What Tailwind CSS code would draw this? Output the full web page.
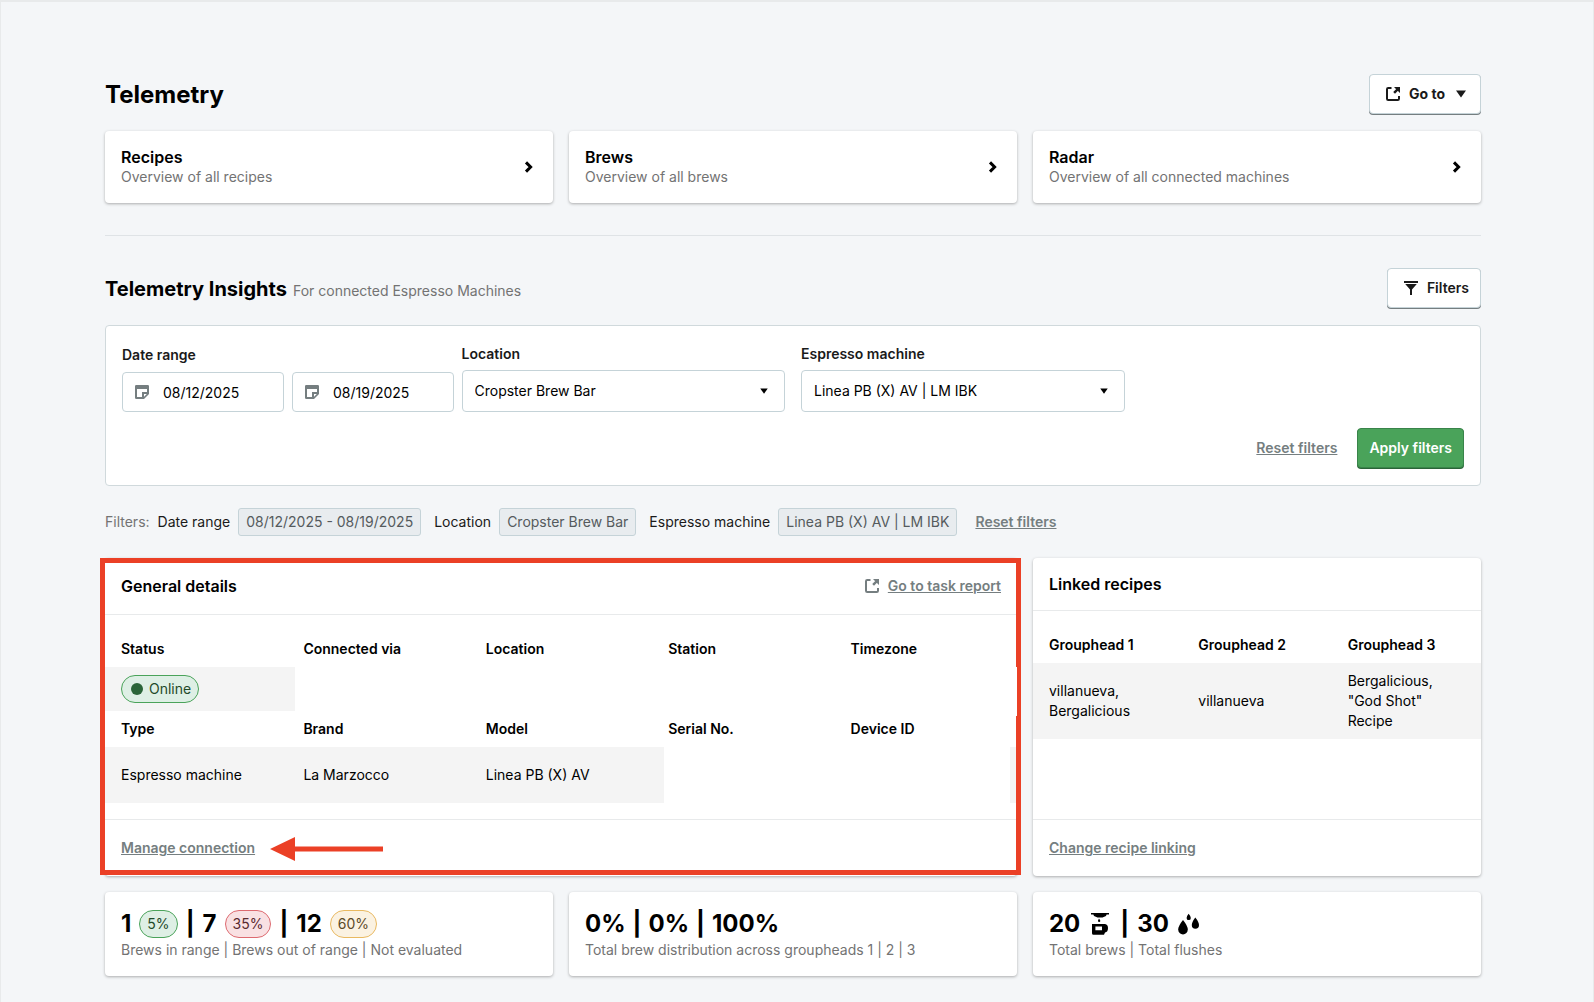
<!DOCTYPE html>
<html lang="en">
<head>
  <meta charset="UTF-8" />
  <meta name="viewport" content="width=device-width, initial-scale=1.0" />
  <title>Telemetry</title>
  <script src="https://cdn.jsdelivr.net/npm/@tailwindcss/browser@4"></script>
</head>
<body class="min-h-screen bg-[#f4f6f8] border-x border-t-2 border-[#e8eaeb] pt-18 pb-6 pl-26 pr-28 font-['Inter',sans-serif] text-sm leading-5 text-black">

  <!-- shared icons -->
  <svg class="hidden">
    <symbol id="icon-open" viewBox="0 0 16 16">
      <path d="M6.5 2H3.2Q2 2 2 3.2V12.8Q2 14 3.2 14H12.8Q14 14 14 12.8V10" fill="none" stroke="currentColor" stroke-width="2"/>
      <path d="M9 1H15V7ZM12.6 1.8L14.2 3.4L10 7.8L8.2 6Z" fill="currentColor"/>
    </symbol>
    <symbol id="icon-chevron" viewBox="0 0 16 16">
      <path d="M5 3.4L9.6 8L5 12.6" fill="none" stroke="currentColor" stroke-width="3"/>
    </symbol>
    <symbol id="icon-note" viewBox="0 0 16 16">
      <path fill-rule="evenodd" d="M2.2 1H13.8Q15 1 15 2.2V10L10 15H2.2Q1 15 1 13.8V2.2Q1 1 2.2 1ZM3 5V13H8V8H13V5ZM10 10V12.8L12.8 10Z" fill="currentColor"/>
    </symbol>
    <symbol id="icon-caret" viewBox="0 0 10 8">
      <path d="M0 0.5H10L5 7.5Z" fill="currentColor"/>
    </symbol>
  </svg>

  <header class="flex items-center justify-between">
    <h1 class="text-2xl font-bold">Telemetry</h1>
    <button type="button" class="mb-px flex h-10 items-center gap-2 rounded border border-[#c5d3d8] bg-white pl-[15px] pr-[11px] font-bold text-[#1a1a1a] shadow-[0_1px_0_#757e80]">
      <svg class="size-4"><use href="#icon-open"/></svg>
      Go to
      <svg class="mx-[3px] h-2 w-2.5"><use href="#icon-caret"/></svg>
    </button>
  </header>

  <nav class="mt-4 grid grid-cols-3 gap-4">
    <a href="#recipes" class="flex items-center justify-between rounded bg-white p-4 shadow-[0_1px_3px_rgba(0,0,0,0.3)]">
      <span>
        <span class="block text-base leading-5 font-semibold">Recipes</span>
        <span class="block text-[#737373]">Overview of all recipes</span>
      </span>
      <svg class="size-4"><use href="#icon-chevron"/></svg>
    </a>
    <a href="#brews" class="flex items-center justify-between rounded bg-white p-4 shadow-[0_1px_3px_rgba(0,0,0,0.3)]">
      <span>
        <span class="block text-base leading-5 font-semibold">Brews</span>
        <span class="block text-[#737373]">Overview of all brews</span>
      </span>
      <svg class="size-4"><use href="#icon-chevron"/></svg>
    </a>
    <a href="#radar" class="flex items-center justify-between rounded bg-white p-4 shadow-[0_1px_3px_rgba(0,0,0,0.3)]">
      <span>
        <span class="block text-base leading-5 font-semibold">Radar</span>
        <span class="block text-[#737373]">Overview of all connected machines</span>
      </span>
      <svg class="size-4"><use href="#icon-chevron"/></svg>
    </a>
  </nav>

  <hr class="my-8 border-[#dfe3e6]" />

  <div class="flex items-center justify-between">
    <div class="flex items-baseline gap-1.5">
      <h2 class="text-xl font-bold">Telemetry Insights</h2>
      <span class="text-[#737373]">For connected Espresso Machines</span>
    </div>
    <button type="button" class="mb-px flex h-10 items-center gap-2 rounded border border-[#c5d3d8] bg-white pl-[15px] pr-[11px] font-semibold text-[#1a1a1a] shadow-[0_1px_0_#757e80]">
      <svg class="size-4" viewBox="0 0 16 16"><path d="M1 1H15V3H1ZM2.2 4H13.8L9 9.6V15H7V9.6Z" fill="currentColor"/></svg>
      Filters
    </button>
  </div>

  <form class="mt-4 rounded border border-[#d0d9dc] bg-white p-4">
    <div class="grid grid-cols-4 gap-4">
      <div>
        <label for="date-from" class="mb-1 block leading-[26px] font-semibold text-[#1a1a1a]">Date range</label>
        <div class="flex gap-2">
          <div class="relative">
            <input id="date-from" type="text" value="08/12/2025" class="block h-10 w-[162px] rounded border border-[#c5d3d8] bg-white pl-10" />
            <svg class="absolute top-3 left-3 size-4 text-[#757e80]"><use href="#icon-note"/></svg>
          </div>
          <div class="relative">
            <input id="date-to" type="text" value="08/19/2025" aria-label="Date range end" class="block h-10 w-[162px] rounded border border-[#c5d3d8] bg-white pl-10" />
            <svg class="absolute top-3 left-3 size-4 text-[#757e80]"><use href="#icon-note"/></svg>
          </div>
        </div>
      </div>
      <div>
        <label for="location" class="mb-1 block leading-6 font-semibold text-[#1a1a1a]">Location</label>
        <div class="relative">
          <select id="location" class="block h-[42px] w-full appearance-none rounded border border-[#c5d3d8] bg-white px-3">
            <option>Cropster Brew Bar</option>
          </select>
          <svg class="pointer-events-none absolute top-[18px] right-[17px] h-1.5 w-2"><use href="#icon-caret"/></svg>
        </div>
      </div>
      <div>
        <label for="machine" class="mb-1 block leading-6 font-semibold text-[#1a1a1a]">Espresso machine</label>
        <div class="relative">
          <select id="machine" class="block h-[42px] w-full appearance-none rounded border border-[#c5d3d8] bg-white px-3">
            <option>Linea PB (X) AV | LM IBK</option>
          </select>
          <svg class="pointer-events-none absolute top-[18px] right-[17px] h-1.5 w-2"><use href="#icon-caret"/></svg>
        </div>
      </div>
    </div>
    <div class="mt-4 flex items-center justify-end gap-5">
      <button type="reset" class="mb-px font-semibold text-[#757e80] underline">Reset filters</button>
      <button type="submit" class="mb-px h-10 rounded border border-[#39844a] bg-[#4aa35a] px-[11px] font-semibold text-white shadow-[0_1px_0_#2a6438]">Apply filters</button>
    </div>
  </form>

  <div class="my-[22px] flex items-center gap-2 text-[#1a1a1a]">
    <span class="text-[#737373]">Filters:</span>
    <span>Date range</span>
    <span class="mr-[5px] rounded-[3px] border border-[#c5d3d8] bg-[#e8ecef] px-[7px] py-[3px] text-[#555b5d]">08/12/2025 - 08/19/2025</span>
    <span>Location</span>
    <span class="mr-[5px] rounded-[3px] border border-[#c5d3d8] bg-[#e8ecef] px-[7px] py-[3px] text-[#555b5d]">Cropster Brew Bar</span>
    <span>Espresso machine</span>
    <span class="mr-2.5 rounded-[3px] border border-[#c5d3d8] bg-[#e8ecef] px-[7px] py-[3px] text-[#555b5d]">Linea PB (X) AV | LM IBK</span>
    <button type="button" class="font-semibold text-[#757e80] underline">Reset filters</button>
  </div>

  <main class="grid grid-cols-3 gap-4">

    <section class="relative col-span-2 flex flex-col rounded bg-white shadow-[0_1px_3px_rgba(0,0,0,0.3)]">
      <div class="flex h-[57px] items-center justify-between border-b border-[#e8eaeb] px-4">
        <h3 class="text-base font-semibold">General details</h3>
        <a href="#report" class="flex items-center gap-2 font-semibold text-[#757e80]">
          <svg class="size-4"><use href="#icon-open"/></svg>
          <span class="underline">Go to task report</span>
        </a>
      </div>

      <div class="relative my-4">
        <table class="w-full table-fixed text-left">
          <tbody>
            <tr class="h-9">
              <th class="px-4 font-semibold">Status</th>
              <th class="px-4 font-semibold">Connected via</th>
              <th class="px-4 font-semibold">Location</th>
              <th class="px-4 font-semibold">Station</th>
              <th class="px-4 font-semibold">Timezone</th>
            </tr>
            <tr class="h-11 bg-[#f4f4f4]">
              <td class="px-4">
                <span class="flex w-fit items-center gap-1.5 rounded-full border border-[#4aa35a] bg-[#deefe5] py-[3px] pr-[7px] pl-[9px] text-[#1f4a2a]">
                  <span class="size-3 rounded-full bg-[#2a6438]"></span>
                  Online
                </span>
              </td>
              <td></td><td></td><td></td><td></td>
            </tr>
            <tr class="h-9">
              <th class="px-4 font-semibold">Type</th>
              <th class="px-4 font-semibold">Brand</th>
              <th class="px-4 font-semibold">Model</th>
              <th class="px-4 font-semibold">Serial No.</th>
              <th class="px-4 font-semibold">Device ID</th>
            </tr>
            <tr class="h-14 bg-[#f4f4f4]">
              <td class="px-4">Espresso machine</td>
              <td class="px-4">La Marzocco</td>
              <td class="px-4">Linea PB (X) AV</td>
              <td></td><td></td>
            </tr>
          </tbody>
        </table>
        <div class="absolute top-9 right-0 left-[190px] z-10 h-[49px] bg-white"></div>
        <div class="absolute top-[116px] right-[7px] left-[559px] h-14 bg-white"></div>
      </div>

      <div class="mt-auto flex h-[57px] items-center gap-[15px] border-t border-[#e8eaeb] px-4">
        <a href="#connection" class="font-semibold text-[#757e80] underline">Manage connection</a>
        <svg class="mt-0.5 h-6 w-[113px]" viewBox="0 0 113 24"><path d="M0 12L25 0V9.5H113V14.5H25V24Z" fill="#eb4026"/></svg>
      </div>

      <!-- highlight frame -->
      <div class="pointer-events-none absolute top-0 -right-1 bottom-px -left-[5px] border-5 border-[#eb4026]"></div>
    </section>

    <section class="flex flex-col rounded bg-white shadow-[0_1px_3px_rgba(0,0,0,0.3)]">
      <div class="flex h-[53px] items-center border-b border-[#e8eaeb] px-4">
        <h3 class="text-base font-semibold">Linked recipes</h3>
      </div>
      <table class="my-4 w-full table-fixed text-left">
        <thead>
          <tr class="h-9">
            <th class="px-4 font-semibold">Grouphead 1</th>
            <th class="px-4 font-semibold">Grouphead 2</th>
            <th class="px-4 font-semibold">Grouphead 3</th>
          </tr>
        </thead>
        <tbody>
          <tr class="bg-[#f4f4f4]">
            <td class="px-4 py-2">villanueva,<br />Bergalicious</td>
            <td class="px-4 py-2">villanueva</td>
            <td class="px-4 py-2">Bergalicious,<br />"God Shot"<br />Recipe</td>
          </tr>
        </tbody>
      </table>
      <div class="mt-auto flex h-[57px] items-center border-t border-[#e8eaeb] px-4">
        <a href="#linking" class="font-semibold text-[#757e80] underline">Change recipe linking</a>
      </div>
    </section>

    <section class="rounded bg-white p-4 shadow-[0_1px_3px_rgba(0,0,0,0.3)]">
      <div class="flex items-center gap-2 text-2xl font-bold">
        <span>1</span>
        <span class="rounded-full border border-[#4aa35a] bg-[#deefe5] px-[7px] py-[3px] text-sm leading-5 font-normal text-[#1f4a2a]">5%</span>
        <span>|</span>
        <span>7</span>
        <span class="rounded-full border border-[#dd6a70] bg-[#f9e1e3] px-[7px] py-[3px] text-sm leading-5 font-normal text-[#5a2a30]">35%</span>
        <span>|</span>
        <span>12</span>
        <span class="rounded-full border border-[#e9b961] bg-[#fbf2e2] px-[7px] py-[3px] text-sm leading-5 font-normal text-[#5c4a28]">60%</span>
      </div>
      <p class="text-[#737373]">Brews in range | Brews out of range | Not evaluated</p>
    </section>

    <section class="rounded bg-white p-4 shadow-[0_1px_3px_rgba(0,0,0,0.3)]">
      <div class="flex items-center gap-[7px] text-2xl font-bold">
        <span>0%</span>
        <span>|</span>
        <span>0%</span>
        <span>|</span>
        <span>100%</span>
      </div>
      <p class="text-[#737373]">Total brew distribution across groupheads 1 | 2 | 3</p>
    </section>

    <section class="rounded bg-white p-4 shadow-[0_1px_3px_rgba(0,0,0,0.3)]">
      <div class="flex items-center gap-2 text-2xl font-bold">
        <span>20</span>
        <svg class="size-6" viewBox="0 0 24 24" fill="currentColor">
          <path d="M3 1H21V2.4H18.6L18 4L14.5 5.6H9.5L6 4L5.4 2.4H3Z"/>
          <path d="M11 6.4Q12.6 8.2 12.3 9.3Q11.9 10.2 10.9 10Q9.8 9.6 10 8.5Q10.2 7.6 11 6.4Z"/>
          <path fill-rule="evenodd" d="M4 12H17Q20 12.6 20 16Q20 20 17 20.5L16 22.8H5.5Q4 22.8 4 21.3ZM7.4 14.6V18.2H14V14.6Z"/>
        </svg>
        <span>|</span>
        <span>30</span>
        <svg class="size-6" viewBox="0 0 24 24" fill="currentColor">
          <path d="M6 8Q1.2 14 1.2 17.6A4.8 4.9 0 0 0 10.8 17.6Q10.8 14 6 8Z"/>
          <path d="M18.3 5.5Q14.8 10 14.8 13A3.6 3.8 0 0 0 22 13Q22 10 18.3 5.5Z"/>
          <path d="M11.6 1.8Q9.6 4.3 9.6 5.9A2.1 2.2 0 0 0 13.8 5.9Q13.8 4.3 11.6 1.8Z"/>
        </svg>
      </div>
      <p class="text-[#737373]">Total brews | Total flushes</p>
    </section>

  </main>

</body>
</html>
